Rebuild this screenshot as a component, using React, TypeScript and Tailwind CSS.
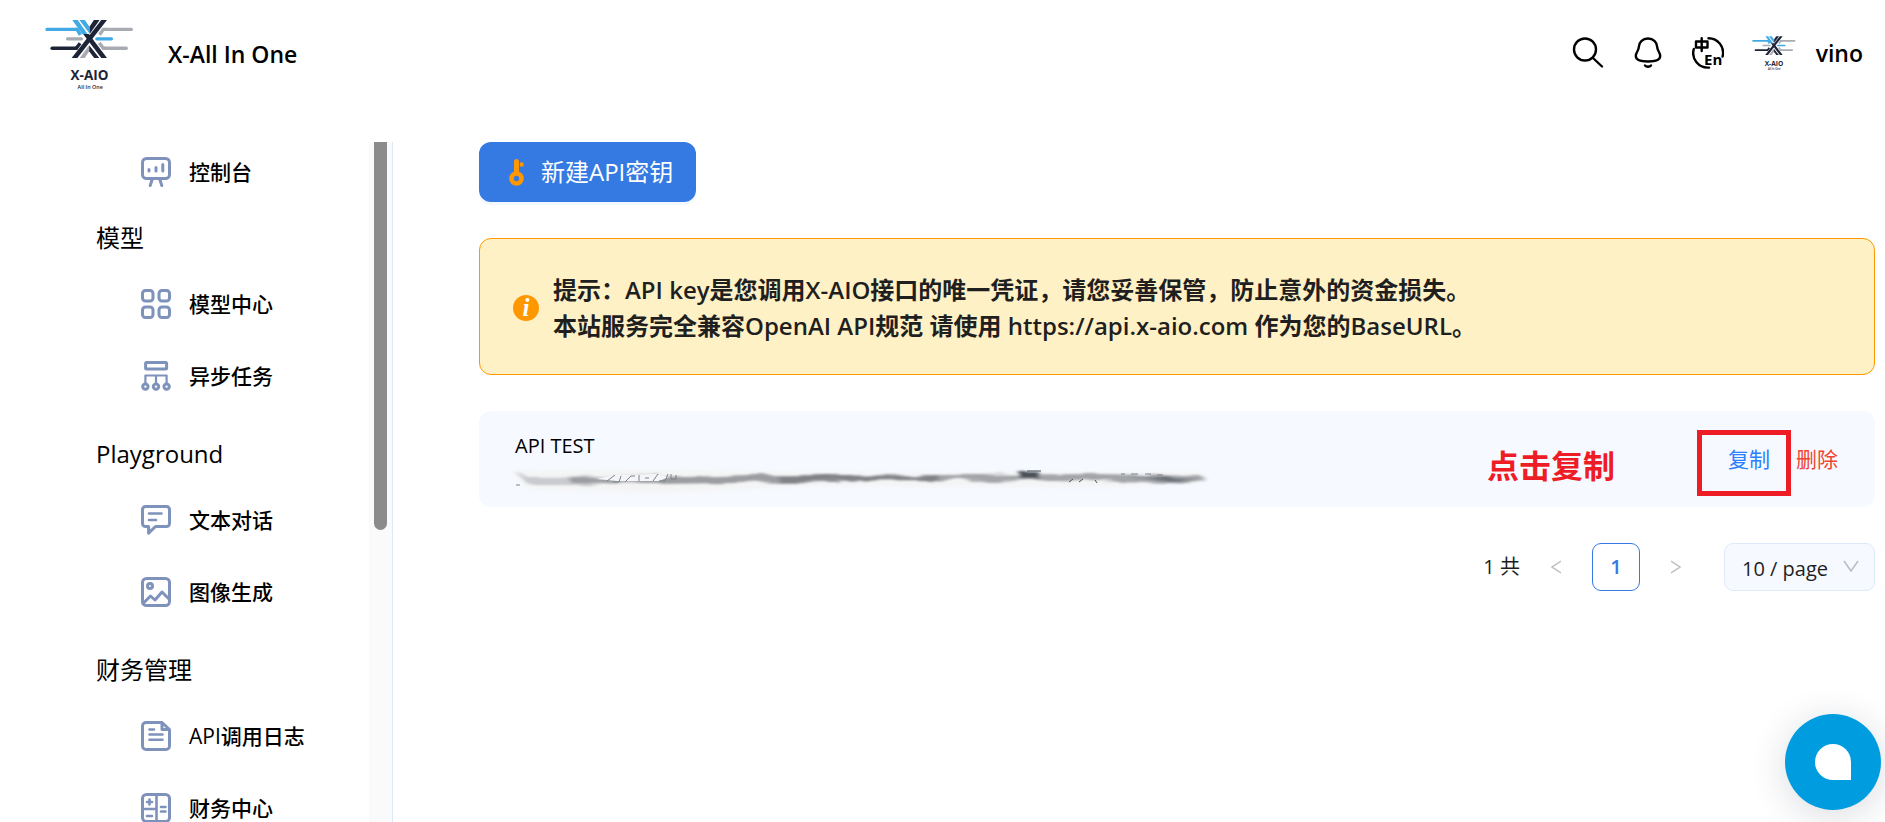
import { ReactNode, useState } from "react";

interface iMenuItem {
  label: string;
  icon: ReactNode;
}

interface iMenuGroup {
  title?: string;
  items: iMenuItem[];
}

interface iApiKey {
  id: number;
  name: string;
}

function Logo({ className }: { className: string }) {
  return (
    <svg viewBox="136 56 264 216" className={className} role="img" aria-label="X-AIO">
      <g fill="none" strokeWidth="10">
        <g stroke="#41a9e4">
          <path d="M142 91H230" strokeLinecap="round" />
          <path d="M227 91H231L241 107" />
          <path d="M290 119H333" strokeLinecap="round" />
        </g>
        <g stroke="#a9abb3">
          <path d="M392 91H312" strokeLinecap="round" />
          <path d="M315 91H309L298 107" />
          <path d="M203 119H244" strokeLinecap="round" />
          <path d="M377 147H312" strokeLinecap="round" />
          <path d="M315 147H309L297 131" />
        </g>
        <g stroke="#1d2438">
          <path d="M157 147H228" strokeLinecap="round" />
          <path d="M225 147H229L240 132" />
        </g>
      </g>
      <path d="M217 63H233L262 105H246Z" fill="#41a9e4" />
      <path d="M238 63H254L269 85V105Z" fill="#41a9e4" />
      <path d="M281 63H298L269 104V82Z" fill="#1d2438" />
      <path d="M303 63H320L232 176H215Z" fill="#1d2438" />
      <path d="M249 105H266L320 176H303Z" fill="#1d2438" />
      <path d="M267 138V156L254 176H239Z" fill="#a9abb3" />
      <path d="M267 138V156L282 176H297Z" fill="#1d2438" />
      <text
        x="268"
        y="240"
        textAnchor="middle"
        className="fill-[#1d2438] font-['Open_Sans',sans-serif] text-[40px] font-bold"
      >
        X-AIO
      </text>
      <text
        x="270"
        y="269"
        textAnchor="middle"
        className="fill-[#1d2438] font-['Open_Sans',sans-serif] text-[16px] font-semibold"
      >
        All In One
      </text>
    </svg>
  );
}

function MenuIcon({ children }: { children: ReactNode }) {
  return (
    <svg
      viewBox="0 0 30 30"
      className="size-[30px] shrink-0"
      fill="none"
      stroke="#7f92bb"
      strokeWidth="3"
      strokeLinecap="round"
      strokeLinejoin="round"
      aria-hidden="true"
    >
      {children}
    </svg>
  );
}

const menu: iMenuGroup[] = [
  {
    items: [
      {
        label: "控制台",
        icon: (
          <MenuIcon>
            <rect x="1.5" y="1.5" width="27" height="20" rx="4" />
            <path d="M8 12.500V14M15 10.500V14M21.800 7.500V14M11 23L9.200 28.600M19 23L20.800 28.600" />
          </MenuIcon>
        ),
      },
    ],
  },
  {
    title: "模型",
    items: [
      {
        label: "模型中心",
        icon: (
          <MenuIcon>
            <rect x="1.5" y="1.5" width="10.500" height="10.500" rx="3" />
            <rect x="18" y="1.5" width="10.500" height="10.500" rx="3" />
            <rect x="1.5" y="18" width="10.500" height="10.500" rx="3" />
            <rect x="18" y="18" width="10.500" height="10.500" rx="3" />
          </MenuIcon>
        ),
      },
      {
        label: "异步任务",
        icon: (
          <MenuIcon>
            <rect x="4.600" y="1.5" width="21" height="6.500" rx="1" />
            <path d="M4.400 22V14.500H25.600V22M15 14.500V22" strokeWidth="2.200" />
            <circle cx="4.400" cy="25.600" r="2.700" />
            <circle cx="15" cy="25.600" r="2.700" />
            <circle cx="25.600" cy="25.600" r="2.700" />
          </MenuIcon>
        ),
      },
    ],
  },
  {
    title: "Playground",
    items: [
      {
        label: "文本对话",
        icon: (
          <MenuIcon>
            <path d="M4.500 1.500H25.500A3 3 0 0 1 28.500 4.500V18.500A3 3 0 0 1 25.500 21.500H14.500L7.600 28.200V21.500H4.500A3 3 0 0 1 1.500 18.500V4.500A3 3 0 0 1 4.500 1.500Z" />
            <path d="M8 8.500H20.500M8 15H15" strokeWidth="2.600" />
          </MenuIcon>
        ),
      },
      {
        label: "图像生成",
        icon: (
          <MenuIcon>
            <rect x="1.5" y="1.5" width="27" height="27" rx="4" />
            <circle cx="9" cy="9" r="2.500" />
            <path d="M2 26.500L9.500 19L14 23L21 15L28 22" />
          </MenuIcon>
        ),
      },
    ],
  },
  {
    title: "财务管理",
    items: [
      {
        label: "API调用日志",
        icon: (
          <MenuIcon>
            <path d="M20.500 1.500H5A3.500 3.500 0 0 0 1.500 5V25A3.500 3.500 0 0 0 5 28.500H25A3.500 3.500 0 0 0 28.500 25V8.500L21 1.500V8.500H28" />
            <path d="M8.500 8.500H13M8.500 13.500H21.500M8.500 18.800H21.500" strokeWidth="2.600" />
          </MenuIcon>
        ),
      },
      {
        label: "财务中心",
        icon: (
          <MenuIcon>
            <rect x="1.5" y="1.5" width="27" height="27" rx="4" />
            <path
              d="M15.500 2V28M2 16H15M8.500 6.500V11.500M6 9H11M6 23H11M20 14H24.500M20 18.500H24.500"
              strokeWidth="2.600"
            />
          </MenuIcon>
        ),
      },
    ],
  },
];

function Header() {
  return (
    <header className="flex h-[142px] shrink-0 items-start justify-between pt-4 pr-[22px] pl-[45px]">
      <a href="#" className="flex items-center gap-[34px] text-black">
        <Logo className="h-[76px] w-[89px]" />
        <span className="text-[23px] font-semibold">X-All In One</span>
      </a>
      <div className="flex h-[74px] items-center">
        <button type="button" aria-label="搜索" className="mr-7 cursor-pointer">
          <svg viewBox="0 0 32 32" className="size-8" fill="none" stroke="black" strokeWidth="2.400" strokeLinecap="round">
            <circle cx="13" cy="12.500" r="11" />
            <path d="M21 21L30 29.500" />
          </svg>
        </button>
        <button type="button" aria-label="通知" className="mr-7 cursor-pointer">
          <svg viewBox="0 0 32 32" className="size-8" fill="none" stroke="black" strokeWidth="2.400" strokeLinecap="round" strokeLinejoin="round">
            <path d="M16 1.500C10.500 1.500 6.800 5.500 6.800 10C6.800 14 3.800 15 3.800 19C3.800 23 9 24.500 16 24.500C23 24.500 28.200 23 28.200 19C28.200 15 25.200 14 25.200 10C25.200 5.500 21.500 1.500 16 1.500Z" />
            <path d="M13 28.500C14.500 30.100 17.500 30.100 19 28.500" />
          </svg>
        </button>
        <button type="button" aria-label="语言" className="mr-7 cursor-pointer">
          <svg viewBox="0 0 32 32" className="size-8" fill="none" stroke="black" strokeWidth="2.400" strokeLinecap="round">
            <path d="M16.500 1.200A14.600 14.600 0 0 1 30.600 19.500" />
            <path d="M1.800 12A14.600 14.600 0 0 0 17 30.600" />
            <path d="M4 4.500H15.500V10.500H4ZM9.700 1.200V14" strokeLinejoin="round" />
            <text
              x="12"
              y="28"
              stroke="none"
              className="fill-black font-['Open_Sans',sans-serif] text-[15px] font-bold"
            >
              En
            </text>
          </svg>
        </button>
        <button type="button" className="flex cursor-pointer items-center gap-5 text-black">
          <Logo className="h-9 w-11" />
          <span className="text-[23px] font-semibold">vino</span>
        </button>
      </div>
    </header>
  );
}

function Sidebar() {
  return (
    <aside className="flex w-[393px] shrink-0 overflow-hidden border-r border-[#dbe7fb]">
      <nav className="flex flex-1 flex-col gap-3 pl-24 text-black">
        {menu.map((group, index) => (
          <div key={index} className={index > 1 ? "mt-3" : ""}>
            {group.title && (
              <h2 className="mb-3 flex h-12 items-center text-[24px]">{group.title}</h2>
            )}
            <ul className="flex flex-col gap-3">
              {group.items.map((item) => (
                <li key={item.label}>
                  <a href="#" className="flex h-[60px] items-center gap-[18px] pl-[45px] text-[21px] font-medium">
                    {item.icon}
                    <span className="pt-0.5">{item.label}</span>
                  </a>
                </li>
              ))}
            </ul>
          </div>
        ))}
      </nav>
      <div className="flex w-[23px] justify-center bg-[#fafafa]">
        <div className="h-[388px] w-[13px] rounded-b-full bg-[#8b8b8b]" />
      </div>
    </aside>
  );
}

// the secret itself is never shown, only a brushed-out strip
function HiddenKey() {
  return (
    <svg viewBox="0 0 704 36" className="-ml-1.5 h-9 w-[704px]" aria-hidden="true">
      <defs>
        <filter id="soft" x="-5%" y="-100%" width="110%" height="300%">
          <feGaussianBlur stdDeviation="3 2" />
        </filter>
        <filter id="brush" x="-5%" y="-100%" width="110%" height="300%">
          <feTurbulence type="fractalNoise" baseFrequency="0.03 0.15" numOctaves="2" seed="4" />
          <feDisplacementMap in="SourceGraphic" scale="7" />
          <feGaussianBlur stdDeviation="2 1" />
        </filter>
      </defs>
      <path d="M2 10L130 9L400 12L690 11L698 20L600 26L300 25L150 32L20 28Z" fill="#f4f4f4" filter="url(#soft)" />
      <g filter="url(#brush)">
        <path d="M6 10L20 16L90 15L150 13L150 21L80 24L20 24Z" fill="#c9cbd0" />
        <path d="M60 17L150 17L240 14L330 14L330 21L220 22L150 23L60 21Z" fill="#9b9da1" />
        <path d="M270 15L440 14L440 19L270 20Z" fill="#808285" />
        <path d="M430 14L590 13L690 15L698 19L680 23L590 19L430 20Z" fill="#a3a5a9" />
        <path d="M510 11H530V18H510Z" fill="#4b5158" />
        <path d="M620 15L660 16L690 20L660 21Z" fill="#6b7178" />
      </g>
      <path d="M88 18L104 14L146 13L160 16L150 20H108Z" fill="#f3f5f8" />
      <g fill="none" stroke="#7c838b" strokeWidth="1">
        <path d="M7 24H11M98 20L106 14M104 21H110L112 15M116 21L122 15H126M130 14V20M136 17H140M144 20L149 13M150 20H156L159 13M162 13V18H167V14" />
        <path d="M518 10H532M560 21L564 18M570 21L574 18M586 19L588 22" stroke="#4b5158" />
        <path d="M612 13H616M622 13H629M636 13H642M648 14H654" />
      </g>
    </svg>
  );
}

function Pagination() {
  const [pageSize, setPageSize] = useState("10");

  return (
    <div className="mt-9 flex items-center justify-end text-[20px] text-[#1f1f1f]">
      <span className="mr-3">1 共</span>
      <button type="button" aria-label="上一页" disabled className="flex size-12 items-center justify-center">
        <svg viewBox="0 0 10 14" className="h-3.5 w-2.5" fill="none" stroke="#bfbfbf" strokeWidth="1.500">
          <path d="M10 1L1 7L10 13" />
        </svg>
      </button>
      <button
        type="button"
        aria-current="page"
        className="mx-3 size-12 cursor-pointer rounded-[9px] border border-[#3579e2] bg-white font-semibold text-[#3579e2]"
      >
        1
      </button>
      <button type="button" aria-label="下一页" disabled className="flex size-12 items-center justify-center">
        <svg viewBox="0 0 10 14" className="h-3.5 w-2.5" fill="none" stroke="#bfbfbf" strokeWidth="1.500">
          <path d="M0 1L9 7L0 13" />
        </svg>
      </button>
      <div className="relative ml-6">
        <select
          aria-label="每页条数"
          value={pageSize}
          onChange={(event) => setPageSize(event.target.value)}
          className="h-12 w-[151px] cursor-pointer appearance-none rounded-[9px] border border-[#dfe9fb] bg-[#f6f9ff] pt-1 pl-[17px] text-[20px]"
        >
          <option value="10">10 / page</option>
          <option value="20">20 / page</option>
          <option value="50">50 / page</option>
        </select>
        <svg
          viewBox="0 0 16 12"
          className="pointer-events-none absolute top-[17px] right-4 h-3 w-4"
          fill="none"
          stroke="#b9bdc5"
          strokeWidth="1.600"
        >
          <path d="M1 1L8 11L15 1" />
        </svg>
      </div>
    </div>
  );
}

export default function App() {
  const [keys, setKeys] = useState<iApiKey[]>([{ id: 1, name: "API TEST" }]);

  const removeKey = (id: number) => {
    setKeys((keys) => keys.filter((key) => key.id !== id));
  };

  return (
    <div className="flex h-screen flex-col overflow-hidden bg-white font-['Open_Sans','Noto_Sans_CJK_SC',sans-serif]">
      <Header />
      <div className="flex min-h-0 flex-1">
        <Sidebar />
        <main className="min-w-0 flex-1 pr-2.5 pl-[86px]">
          <button
            type="button"
            className="flex h-[60px] cursor-pointer items-center gap-[17px] rounded-xl bg-[#3579e2] pr-[23px] pl-[30px] text-[24px] text-white shadow-[0_3px_0_#f3f8ff]"
          >
            <svg viewBox="0 0 15 27" className="h-[27px] w-[15px]" aria-hidden="true">
              <path d="M5 13V2.500A2.500 2.500 0 0 1 10 2.500V13" fill="#ff9800" />
              <path d="M11 3.500H14.500V7.500H11Z" fill="#ff9800" />
              <circle cx="7.500" cy="19.500" r="5" fill="none" stroke="#ff9800" strokeWidth="4.600" />
            </svg>
            新建API密钥
          </button>

          <div
            role="alert"
            className="mt-9 flex items-center gap-[14px] rounded-xl border border-[#ff9800] bg-[#fef1c5] pt-[33px] pr-8 pb-[30px] pl-[33px]"
          >
            <svg viewBox="0 0 26 26" className="size-[26px] shrink-0" aria-hidden="true">
              <circle cx="13" cy="13" r="13" fill="#ff9800" />
              <text
                x="13"
                y="21"
                textAnchor="middle"
                className="fill-white font-['Liberation_Serif',serif] text-[25px] font-bold italic"
              >
                i
              </text>
            </svg>
            <p className="text-[24px] leading-9 font-semibold text-[#1f1f1f]">
              提示：API key是您调用X-AIO接口的唯一凭证，请您妥善保管，防止意外的资金损失。
              <br />
              本站服务完全兼容OpenAI API规范 请使用 https://api.x-aio.com 作为您的BaseURL。
            </p>
          </div>

          <ul className="mt-9 flex flex-col gap-6">
            {keys.map((key) => (
              <li key={key.id} className="flex items-center justify-between rounded-xl bg-[#f6f9ff] pr-[37px] pl-9">
                <div className="pt-5 pb-2.5">
                  <h3 className="text-[20px] leading-[30px] text-black">{key.name}</h3>
                  <HiddenKey />
                </div>
                <div className="relative flex gap-[26px] pt-0.5 text-[21px]">
                  <button type="button" className="cursor-pointer text-[#2b7fff]">
                    复制
                  </button>
                  <button type="button" onClick={() => removeKey(key.id)} className="cursor-pointer text-[#f0442e]">
                    删除
                  </button>
                  <span className="pointer-events-none absolute -top-3 -left-[31px] h-[66px] w-[94px] border-5 border-[#ee1c25]" />
                  <strong className="pointer-events-none absolute top-0.5 right-[223px] text-[32px] leading-[44px] font-bold whitespace-nowrap text-[#ee1c25]">
                    点击复制
                  </strong>
                </div>
              </li>
            ))}
          </ul>

          <Pagination />
        </main>
      </div>

      <button
        type="button"
        aria-label="在线客服"
        className="fixed right-1 bottom-3 flex size-24 cursor-pointer items-center justify-center rounded-full bg-[#009ce0] shadow-[0_6px_36px_rgba(20,30,60,0.16)]"
      >
        <span className="size-9 rounded-full rounded-br-none bg-white" />
      </button>
    </div>
  );
}
